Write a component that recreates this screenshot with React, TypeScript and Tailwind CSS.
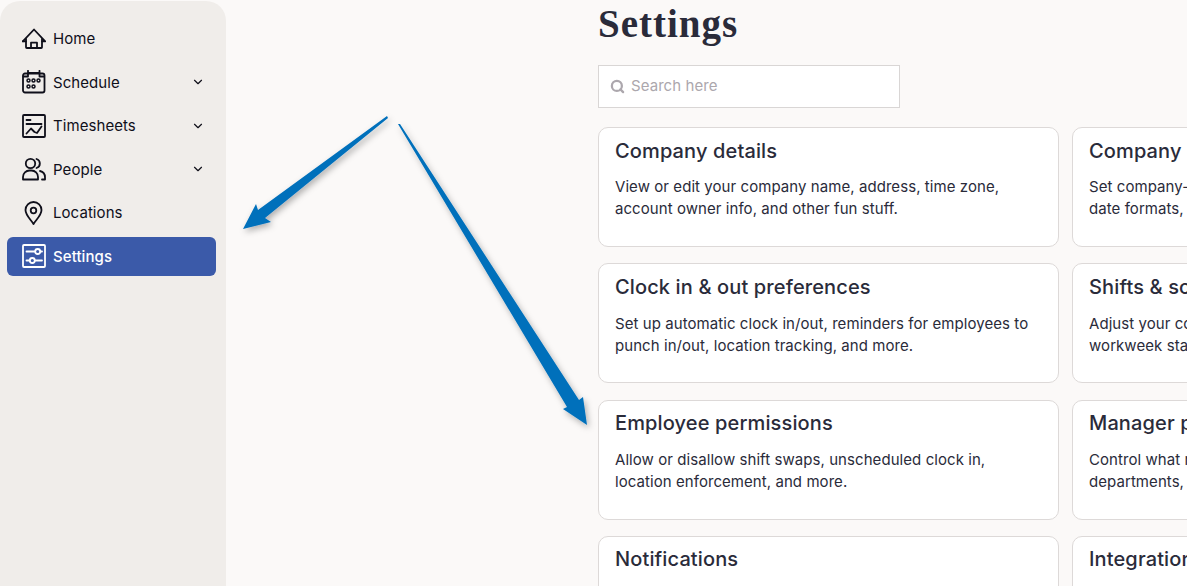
import React from "react";
import { ChevronDown, Search } from "lucide-react";

const navItems = [
  { label: "Home", icon: "home" },
  { label: "Schedule", icon: "schedule", more: true },
  { label: "Timesheets", icon: "timesheets", more: true },
  { label: "People", icon: "people", more: true },
  { label: "Locations", icon: "locations" },
  { label: "Settings", icon: "settings", active: true },
];

const cards = [
  { title: "Company details", lines: ["View or edit your company name, address, time zone,", "account owner info, and other fun stuff."] },
  { title: "Company preferences", lines: ["Set company-wide preferences such as", "date formats, currencies and more."] },
  { title: "Clock in & out preferences", lines: ["Set up automatic clock in/out, reminders for employees to", "punch in/out, location tracking, and more."] },
  { title: "Shifts & schedules", lines: ["Adjust your company's schedule settings,", "workweek start and more."] },
  { title: "Employee permissions", lines: ["Allow or disallow shift swaps, unscheduled clock in,", "location enforcement, and more."] },
  { title: "Manager permissions", lines: ["Control what managers can do in their", "departments, and more."] },
  { title: "Notifications", lines: [] },
  { title: "Integrations", lines: [] },
];

function NavIcon({ name }: { name: string }) {
  const common = {
    width: 24,
    height: 24,
    viewBox: "0 0 24 24",
    fill: "none",
    stroke: "currentColor",
    strokeWidth: 1.8,
    strokeLinecap: "round" as const,
    strokeLinejoin: "round" as const,
  };
  if (name === "home") {
    return (
      <svg {...common}>
        <path d="M.8 14.300 12 2.500l11.200 11.800h-3.200" />
        <path d="M.8 14.300H4" />
        <path d="M4 12v8.200a.8.8 0 0 0 .8.8h14.400a.8.8 0 0 0 .8-.8V12" />
        <path d="M9 21v-5.300h6V21" />
      </svg>
    );
  }
  if (name === "schedule") {
    return (
      <svg {...common}>
        <rect x="1" y="3.500" width="21.500" height="19" rx="2" />
        <path d="M6 .8v5.400M17.500.8v5.400M6 3h11.500M1.500 6.500h4.500M17.500 6.500h4.500" />
        <circle cx="6.500" cy="10.500" r="1.500" strokeWidth="1.500" />
        <circle cx="11.500" cy="10.500" r="1.500" strokeWidth="1.500" />
        <circle cx="16.500" cy="10.500" r="1.500" strokeWidth="1.500" />
        <circle cx="6.500" cy="16.500" r="1.500" strokeWidth="1.500" />
        <circle cx="11.500" cy="16.500" r="1.500" strokeWidth="1.500" />
      </svg>
    );
  }
  if (name === "timesheets") {
    return (
      <svg {...common}>
        <rect x="1" y="1" width="22" height="22" rx="1" />
        <path d="M4.500 6h4M4.500 10h15" />
        <path d="M4.500 19.500 9 14.500l3.500 3.500 2.500 1 4.500-6.500" />
      </svg>
    );
  }
  if (name === "people") {
    return (
      <svg {...common}>
        <circle cx="8.500" cy="6.500" r="4.700" />
        <path d="M1 22.500v-2.500a6.500 6.500 0 0 1 6.500-6.500h2a6.500 6.500 0 0 1 6.500 6.500v2.500z" />
        <path d="M14.500 2a4.700 4.700 0 0 1 0 9M18 14a6.500 6.500 0 0 1 5 6.300v2.200h-3" />
      </svg>
    );
  }
  if (name === "locations") {
    return (
      <svg {...common}>
        <path d="M11.500 23c-2-3.800-8-8.500-8-14a8 8 0 0 1 16 0c0 5.500-6 10.200-8 14z" />
        <circle cx="11.500" cy="9.500" r="2.800" />
      </svg>
    );
  }
  return (
    <svg {...common}>
      <rect x="1" y="1" width="22" height="22" rx="1" />
      <path d="M4.500 7.500h8.500M18.500 7.500h1.500M4.500 16.500h3M13 16.500h7" />
      <circle cx="15.700" cy="7.500" r="2.500" />
      <circle cx="10.300" cy="16.500" r="2.500" />
    </svg>
  );
}

function Sidebar() {
  return (
    <aside className="w-[226px] h-[585px] mt-px shrink-0 bg-[#f0edea] rounded-t-[20px] pt-[18px] pl-[7px] pr-[10px] flex flex-col gap-[4.5px]">
      {navItems.map((item) => (
        <div
          key={item.label}
          className={`h-[39px] flex items-center pl-[15px] pr-[11px] rounded-md text-[15px] tracking-[0.07px] ${
            item.active ? "bg-[#3b5aa9] text-white font-medium" : "text-[#0f0f1a]"
          }`}
        >
          <NavIcon name={item.icon} />
          <span className="ml-[7px] mt-[2px] flex-1">{item.label}</span>
          {item.more && <ChevronDown size={14} strokeWidth={2} />}
        </div>
      ))}
    </aside>
  );
}

function Card({ title, lines }: { title: string; lines: string[] }) {
  return (
    <div className="w-[461px] h-[120px] shrink-0 bg-white border border-[#ddd9d8] rounded-[10px] pt-[8.7px] px-4 overflow-hidden whitespace-nowrap">
      <div className="text-[20px] leading-[28px] font-medium tracking-[0.13px] text-[#2a2b3a]">{title}</div>
      <div className="mt-[11.6px] text-[15px] leading-[22px] tracking-[0.065px] text-[#2a2b3a]">
        {lines.map((line) => (
          <div key={line}>{line}</div>
        ))}
      </div>
    </div>
  );
}

function Arrows() {
  return (
    <svg className="absolute inset-0 pointer-events-none" width="1187" height="586">
      <defs>
        <filter id="arrowShadow" x="-20%" y="-20%" width="140%" height="140%">
          <feDropShadow dx="2" dy="3" stdDeviation="3" floodColor="#000" floodOpacity="0.3" />
        </filter>
      </defs>
      <g fill="#0470bb" filter="url(#arrowShadow)">
        <polygon points="387,116 388,118 265,218 271,222 243,229 256,204 258,210" />
        <polygon points="398,124 400,124 579,400 583,397 587,425 563,409 567,407" />
      </g>
    </svg>
  );
}

export default function App() {
  return (
    <div className="relative w-[1187px] h-[586px] overflow-hidden bg-[#fbf9f8] flex font-['Inter',sans-serif]">
      <Sidebar />
      <main className="pl-[372px] flex-1 min-w-0">
        <h1 className="font-['Liberation_Serif',serif] text-[39px] leading-[48px] font-bold text-[#2a2b3a] tracking-[1px]">
          Settings
        </h1>
        <div className="mt-[17px] w-[302px] h-[43px] bg-white border border-[#d9d6d5] flex items-center pl-[11px] text-[15px] tracking-[0.07px] text-[#aca7ad]">
          <Search size={15} strokeWidth={3.6} />
          <span className="ml-[6px]">Search here</span>
        </div>
        <div className="mt-[19px] grid grid-cols-[461px_461px] gap-x-[13px] gap-y-[16.25px]">
          {cards.map((card) => (
            <Card key={card.title} title={card.title} lines={card.lines} />
          ))}
        </div>
      </main>
      <Arrows />
    </div>
  );
}
